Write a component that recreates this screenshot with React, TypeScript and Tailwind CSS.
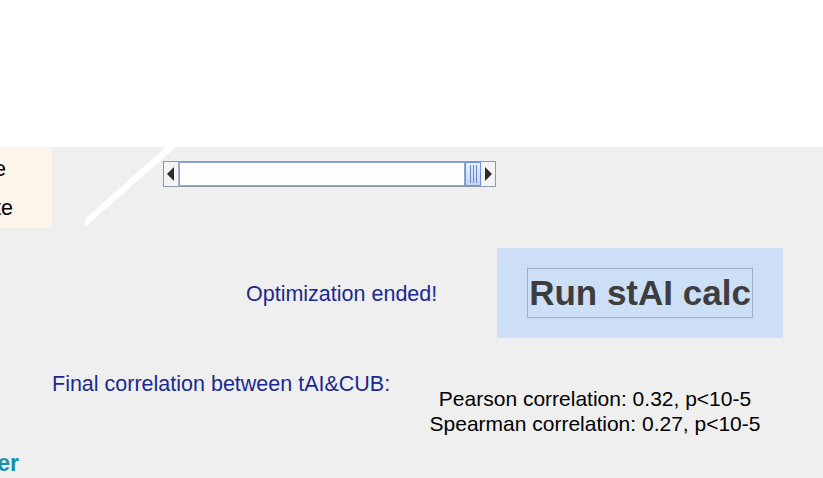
import React from "react";

const font = { fontFamily: '"Liberation Sans", Arial, sans-serif' };

function ScrollBar() {
  return (
    <div className="flex h-[26px] w-[333px] border border-[#8e99a9] bg-[#f4f4f4]">
      <div className="flex w-[15px] items-center justify-center border-r border-[#a9b6c8]">
        <svg width="8" height="14" viewBox="0 0 8 14">
          <path d="M7 0 L0 7 L7 14 Z" fill="#2b2b2b" />
        </svg>
      </div>
      <div className="flex-1 border border-[#8aa6cf] bg-white" />
      <div className="flex w-[16px] items-center justify-center gap-[2px] border border-[#6f93d6] bg-gradient-to-b from-[#e9f0fb] to-[#c5d6f2]">
        <div className="h-[18px] w-px bg-[#5d86d6]" />
        <div className="h-[18px] w-px bg-[#5d86d6]" />
        <div className="h-[18px] w-px bg-[#5d86d6]" />
      </div>
      <div className="flex w-[14px] items-center justify-center">
        <svg width="8" height="14" viewBox="0 0 8 14">
          <path d="M1 0 L8 7 L1 14 Z" fill="#2b2b2b" />
        </svg>
      </div>
    </div>
  );
}

export default function App() {
  return (
    <div className="h-[478px] w-[823px] overflow-hidden bg-white" style={font}>
      <div className="h-[147px] bg-white" />
      <div className="relative h-[331px] bg-[#efefef]">
        <svg className="absolute left-[80px] top-0" width="100" height="85" viewBox="0 0 100 85">
          <path d="M5 72 L86 0 L96 0 L5 80 Z" fill="#ffffff" />
        </svg>

        <div className="flex">
          <div className="flex h-[81px] w-[52px] flex-col overflow-hidden bg-[#fdf5ea] text-[21.5px] leading-none text-black">
            <div className="mt-[12px] flex justify-end whitespace-nowrap pr-[46px]">Exclude</div>
            <div className="mt-[17px] flex justify-end whitespace-nowrap pr-[39px]">Compute</div>
          </div>
          <div className="ml-[111px] mt-[14px]">
            <ScrollBar />
          </div>
        </div>

        <div className="mt-[20px] flex items-center">
          <div className="ml-[246px] w-[251px] pt-[2px] text-[21.5px] text-[#1b2a8e]">Optimization ended!</div>
          <div className="flex h-[90px] w-[286px] items-center justify-center bg-[#cddff6]">
            <div className="flex h-[50px] w-[226px] items-center justify-center border border-[#9eb0c9] text-[35px] font-bold text-[#3d3d3d]">
              Run stAI calc
            </div>
          </div>
        </div>

        <div className="mt-[34px] flex">
          <div className="ml-[52px] w-[368px] text-[21.5px] leading-[24px] text-[#1b2a8e]">
            Final correlation between tAI&amp;CUB:
          </div>
          <div className="mt-[14px] w-[350px] text-center text-[21px] leading-[25px] text-black">
            <div>Pearson correlation: 0.32, p&lt;10-5</div>
            <div>Spearman correlation: 0.27, p&lt;10-5</div>
          </div>
        </div>

        <div className="mt-[16px] flex w-[19px] justify-end overflow-hidden whitespace-nowrap text-[23px] font-bold leading-none text-[#1a8fa9]">
          Filter
        </div>
      </div>
    </div>
  );
}
